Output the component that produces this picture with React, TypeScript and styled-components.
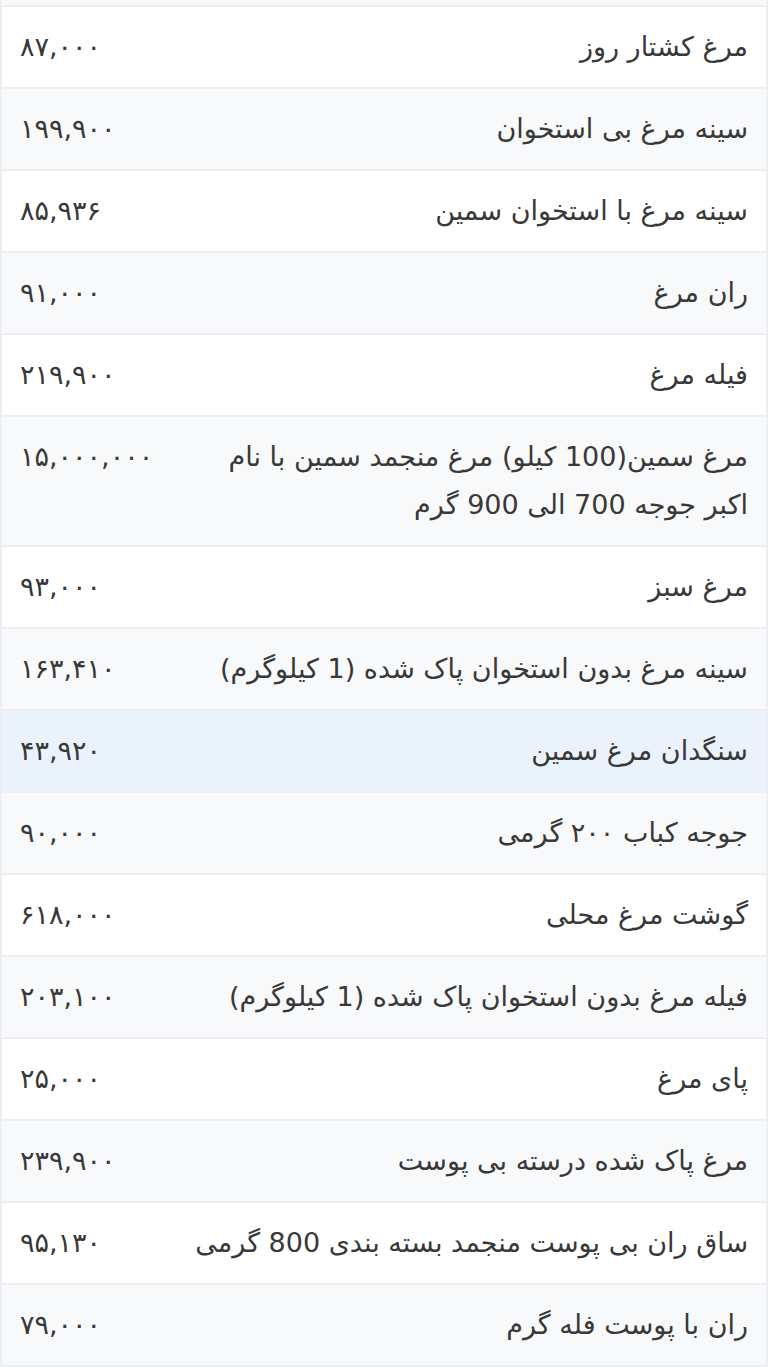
import React from "react";
import styled, { createGlobalStyle } from "styled-components";

const colors = {
  text: "#383838",
  border: "#eceef1",
  stripe: "#f8f9fb",
  white: "#ffffff",
  hover: "#eaf2fb",
};

type PriceItem = {
  name: string;
  price: string;
};

const items: PriceItem[] = [
  { name: "مرغ کشتار روز", price: "۸۷,۰۰۰" },
  { name: "سینه مرغ بی استخوان", price: "۱۹۹,۹۰۰" },
  { name: "سینه مرغ با استخوان سمین", price: "۸۵,۹۳۶" },
  { name: "ران مرغ", price: "۹۱,۰۰۰" },
  { name: "فیله مرغ", price: "۲۱۹,۹۰۰" },
  {
    name: "مرغ سمین(100 کیلو) مرغ منجمد سمین با نام اکبر جوجه 700 الی 900 گرم",
    price: "۱۵,۰۰۰,۰۰۰",
  },
  { name: "مرغ سبز", price: "۹۳,۰۰۰" },
  { name: "سینه مرغ بدون استخوان پاک شده (1 کیلوگرم)", price: "۱۶۳,۴۱۰" },
  { name: "سنگدان مرغ سمین", price: "۴۳,۹۲۰" },
  { name: "جوجه کباب ۲۰۰ گرمی", price: "۹۰,۰۰۰" },
  { name: "گوشت مرغ محلی", price: "۶۱۸,۰۰۰" },
  { name: "فیله مرغ بدون استخوان پاک شده (1 کیلوگرم)", price: "۲۰۳,۱۰۰" },
  { name: "پای مرغ", price: "۲۵,۰۰۰" },
  { name: "مرغ پاک شده درسته بی پوست", price: "۲۳۹,۹۰۰" },
  { name: "ساق ران بی پوست منجمد بسته بندی 800 گرمی", price: "۹۵,۱۳۰" },
  { name: "ران با پوست فله گرم", price: "۷۹,۰۰۰" },
];

// row that the pointer is resting on in the screenshot
const activeIndex = 8;

const GlobalStyle = createGlobalStyle`
  html, body {
    margin: 0;
    padding: 0;
    background: ${colors.white};
  }
  body {
    font-family: "DejaVu Sans", sans-serif;
    color: ${colors.text};
  }
`;

const StyledPriceList = styled.div`
  width: 768px;
  direction: rtl;

  .cut-row {
    height: 5px;
    background-color: ${colors.stripe};
    border-left: 2px solid ${colors.border};
    border-right: 2px solid ${colors.border};
  }
`;

const PriceTable = styled.table`
  width: 100%;
  border-collapse: collapse;
  table-layout: fixed;
  border-top: 2px solid ${colors.border};
  border-left: 2px solid ${colors.border};
  border-right: 2px solid ${colors.border};
`;

const PriceRow = styled.tr<{ $striped: boolean; $active: boolean }>`
  background-color: ${({ $striped, $active }) =>
    $active ? colors.hover : $striped ? colors.stripe : colors.white};
  border-bottom: 2px solid ${colors.border};
`;

const NameCell = styled.td`
  font-size: 27px;
  line-height: 48px;
  padding: 16px 18px 16px 8px;
  text-align: right;
  vertical-align: top;
`;

const PriceCell = styled.td`
  width: 160px;
  font-size: 27px;
  line-height: 48px;
  padding: 16px 0 16px 18px;
  text-align: left;
  vertical-align: top;
  white-space: nowrap;
`;

const App: React.FC = () => {
  return (
    <>
      <GlobalStyle />
      <StyledPriceList>
        <div className="cut-row"></div>
        <PriceTable>
          <tbody>
            {items.map((item, index) => (
              <PriceRow
                key={item.name}
                $striped={index % 2 === 1}
                $active={index === activeIndex}
              >
                <NameCell>{item.name}</NameCell>
                <PriceCell>{item.price}</PriceCell>
              </PriceRow>
            ))}
          </tbody>
        </PriceTable>
      </StyledPriceList>
    </>
  );
};

export default App;
